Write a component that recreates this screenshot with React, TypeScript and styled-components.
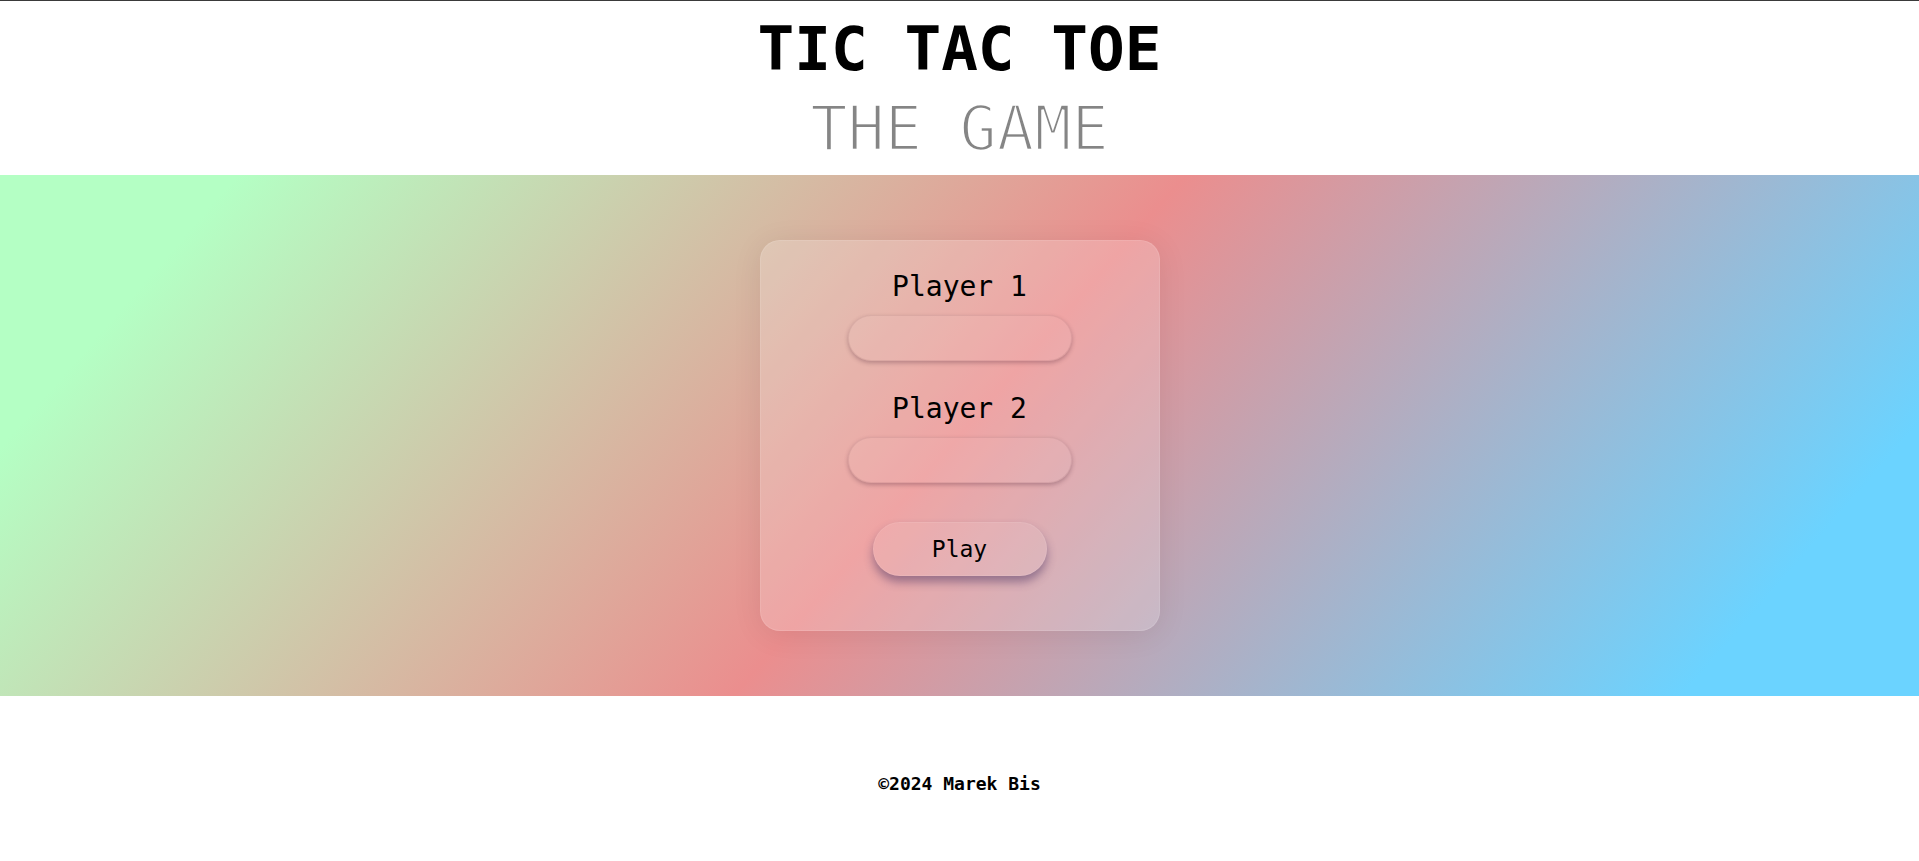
import React from "react";
import styled, { createGlobalStyle } from "styled-components";

const GlobalStyle = createGlobalStyle`
  html, body {
    margin: 0;
    padding: 0;
    background: #ffffff;
  }
  body {
    font-family: "DejaVu Sans Mono", "Liberation Mono", monospace;
    color: #000;
  }
  * { box-sizing: border-box; }
`;

const Header = styled.header`
  border-top: 1px solid #3a3a3a;
  padding: 17px 0 15px;
  text-align: center;
`;

const Title = styled.h1`
  margin: 0;
  font-size: 61px;
  line-height: 62px;
  font-weight: 700;
  color: #000;
`;

const Subtitle = styled.h2`
  margin: 18px 0 0;
  font-size: 62px;
  line-height: 62px;
  font-weight: 400;
  color: #858585;
  -webkit-text-stroke: 2.4px #ffffff;
`;

const Stage = styled.main`
  height: 521px;
  display: flex;
  align-items: center;
  justify-content: center;
  background: linear-gradient(131deg, #b4ffc4 10%, #eb8e8e 50%, #6bd3ff 90%);
`;

const Card = styled.form`
  width: 400px;
  height: 391px;
  padding-top: 31px;
  display: flex;
  flex-direction: column;
  align-items: center;
  border-radius: 20px;
  background: rgba(255, 255, 255, 0.2);
  border: 1px solid rgba(255, 255, 255, 0.1);
  box-shadow: 0 4px 30px rgba(0, 0, 0, 0.08);
`;

const Label = styled.label<{ $gap: number }>`
  margin-top: ${(p) => p.$gap}px;
  font-size: 28px;
  line-height: 29px;
  color: #000;
`;

const NameInput = styled.input`
  margin-top: 14px;
  width: 224px;
  height: 46px;
  border-radius: 23px;
  border: 1px solid rgba(120, 70, 80, 0.12);
  background: rgba(255, 255, 255, 0.05);
  box-shadow: 0 2px 4px rgba(70, 30, 50, 0.3);
  outline: none;
  padding: 0 16px;
  font-family: inherit;
  font-size: 20px;
`;

const PlayButton = styled.button`
  margin-top: 39px;
  width: 174px;
  height: 54px;
  border-radius: 27px;
  border: 1px solid rgba(255, 255, 255, 0.08);
  background: rgba(255, 255, 255, 0.08);
  box-shadow: 0 6px 10px rgba(60, 40, 90, 0.45);
  font-family: inherit;
  font-size: 23px;
  color: #000;
  cursor: pointer;
`;

const Footer = styled.footer`
  padding: 79px 0 70px;
  text-align: center;
  font-size: 18px;
  line-height: 18px;
  font-weight: 700;
  color: #000;
`;

export default function App() {
  return (
    <>
      <GlobalStyle />
      <Header>
        <Title>TIC TAC TOE</Title>
        <Subtitle>THE GAME</Subtitle>
      </Header>
      <Stage>
        <Card onSubmit={(e) => e.preventDefault()}>
          <Label $gap={0} htmlFor="p1">Player 1</Label>
          <NameInput id="p1" type="text" />
          <Label $gap={33} htmlFor="p2">Player 2</Label>
          <NameInput id="p2" type="text" />
          <PlayButton type="submit">Play</PlayButton>
        </Card>
      </Stage>
      <Footer>©2024 Marek Bis</Footer>
    </>
  );
}
